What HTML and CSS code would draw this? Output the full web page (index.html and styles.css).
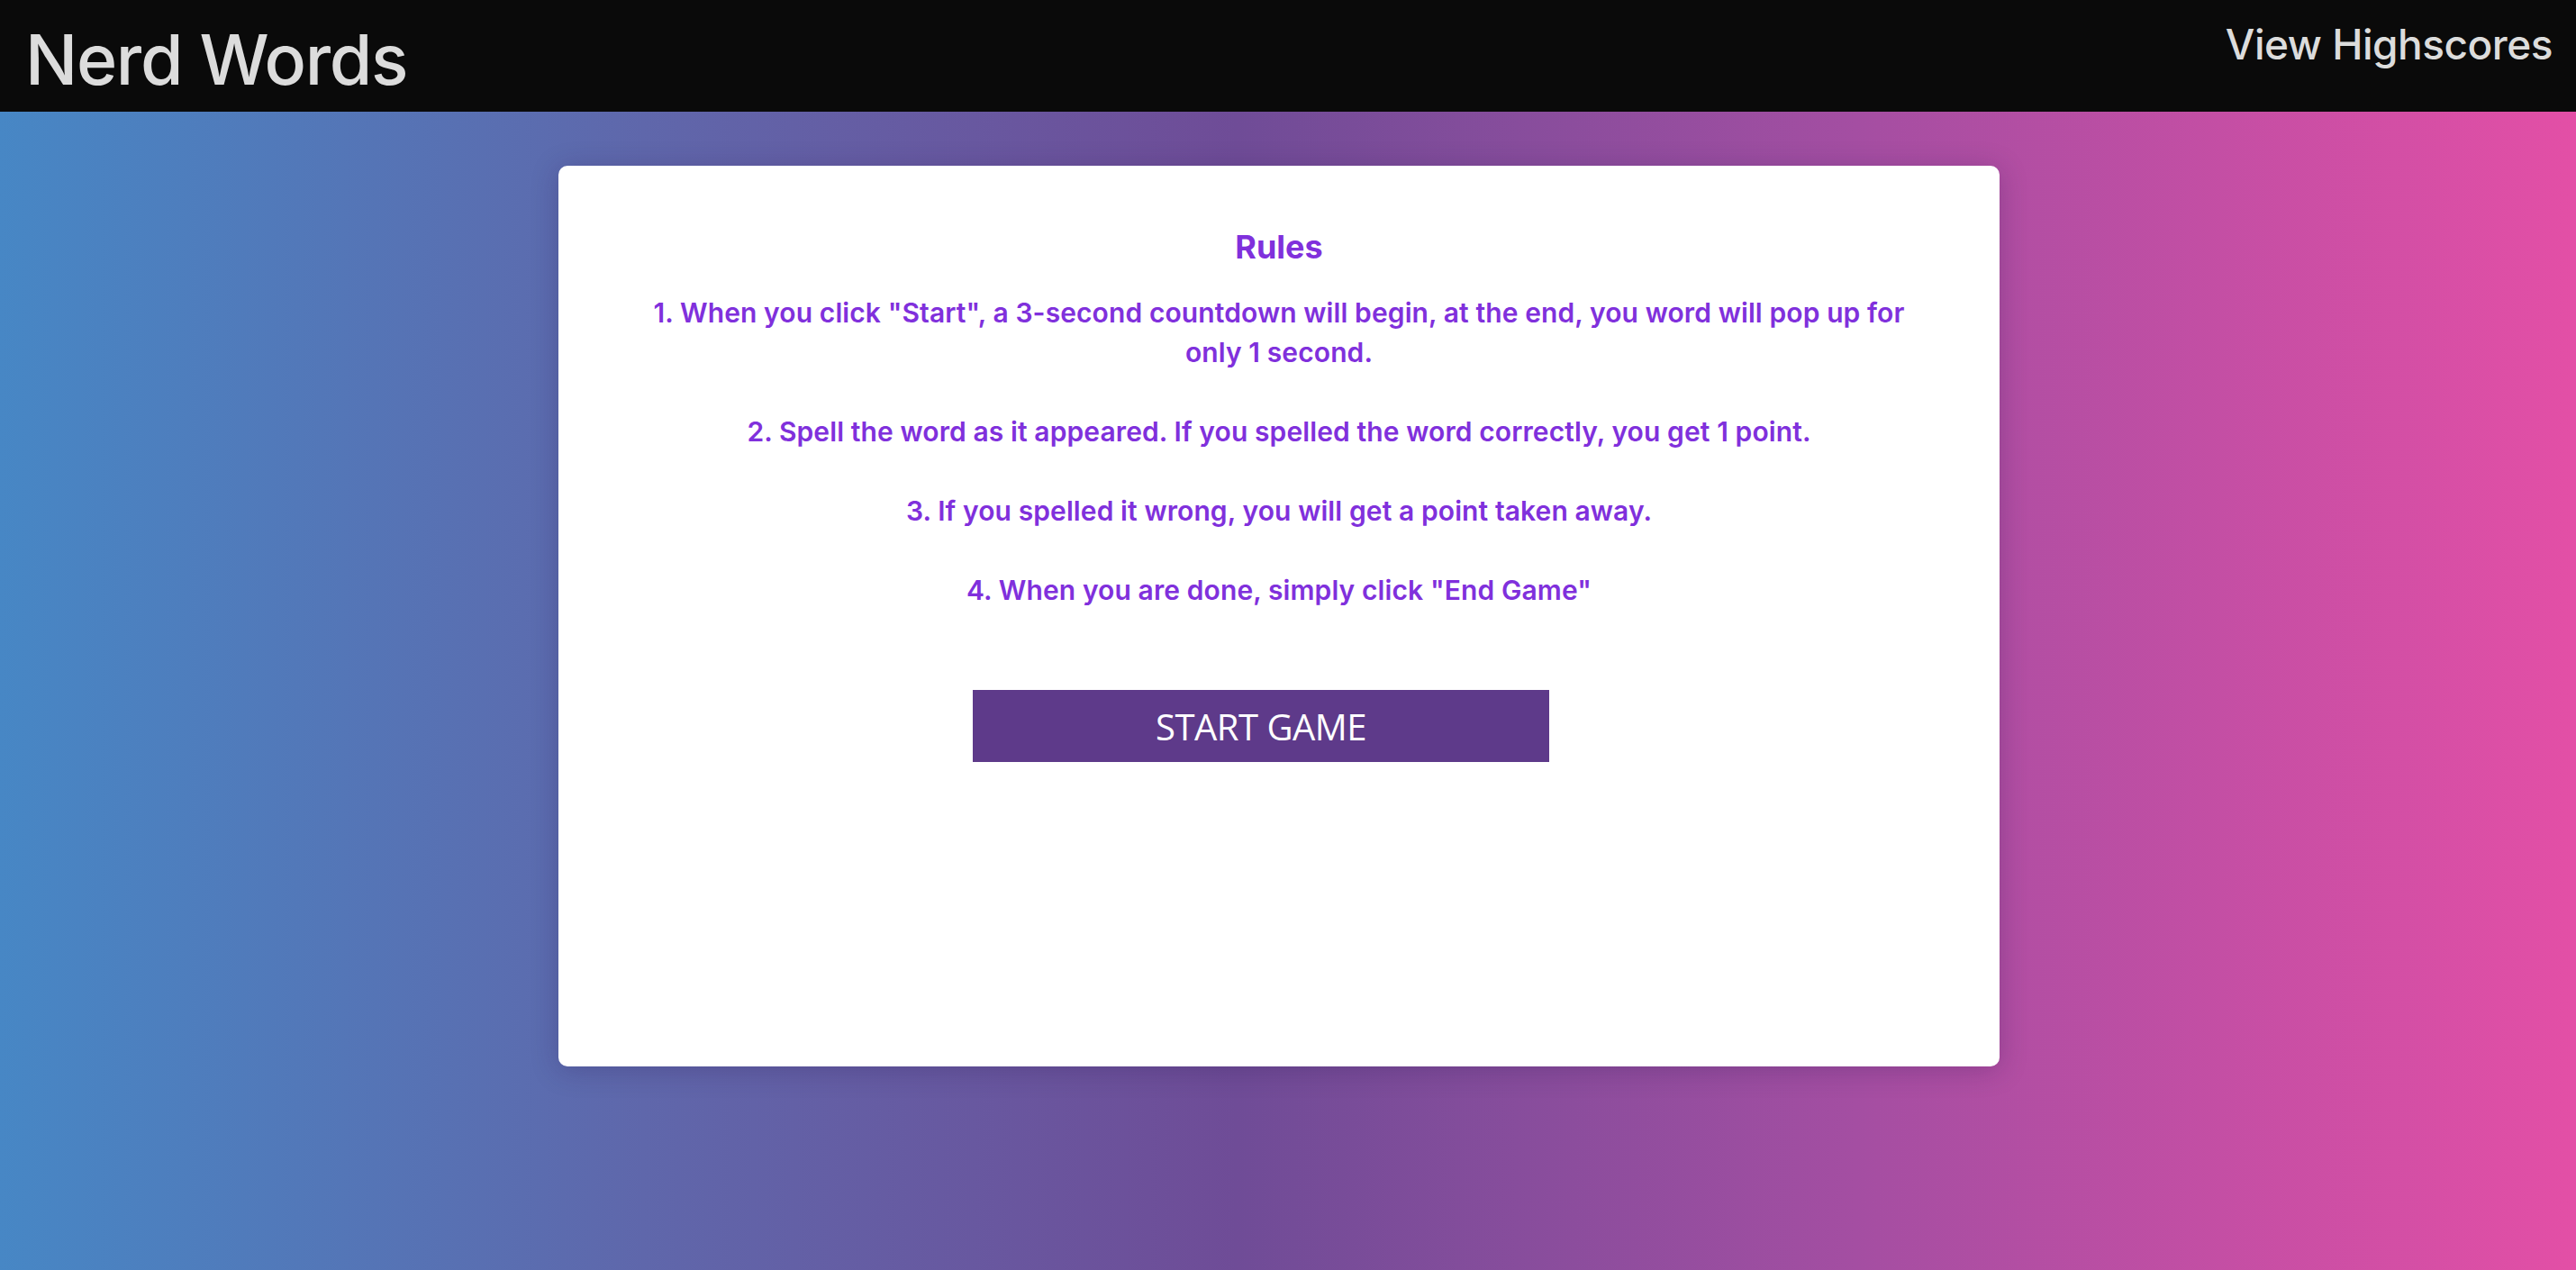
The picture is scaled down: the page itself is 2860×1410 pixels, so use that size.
FILE: index.html
```html
<!DOCTYPE html>
<html lang="en">
<head>
<meta charset="utf-8">
<title>Nerd Words</title>
<link rel="stylesheet" href="styles.css">
</head>
<body>
<header class="topbar">
  <h1 class="brand">Nerd Words</h1>
  <a class="highscores" href="#">View Highscores</a>
</header>
<main class="stage">
  <section class="card">
    <h2 class="rules-title">Rules</h2>
    <div class="rules">
      <p>1. When you click "Start", a 3-second countdown will begin, at the end, you word will pop up for only 1 second.</p>
      <p>2. Spell the word as it appeared. If you spelled the word correctly, you get 1 point.</p>
      <p>3. If you spelled it wrong, you will get a point taken away.</p>
      <p>4. When you are done, simply click "End Game"</p>
    </div>
    <button class="start-btn" type="button">START GAME</button>
  </section>
</main>
</body>
</html>
```
FILE: styles.css
```css
html, body {
  margin: 0;
  padding: 0;
  height: 100%;
}
body {
  font-family: Inter, "Noto Sans", sans-serif;
  background: linear-gradient(90deg, #4787c5 0%, #5f67ab 25%, #6f4c97 48%, #a44ea2 72%, #e34fa6 100%);
  min-height: 1410px;
  display: flex;
  flex-direction: column;
}
.topbar {
  height: 124px;
  background: #0a0a0a;
  display: flex;
  justify-content: space-between;
  align-items: flex-start;
  padding: 0 26px 0 28px;
  box-sizing: border-box;
}
.brand {
  margin: 0;
  font-weight: 500;
  font-size: 77px;
  line-height: 1;
  color: #dcdcdc;
  padding-top: 28px;
  letter-spacing: -1.3px;
}
.highscores {
  color: #dcdcdc;
  text-decoration: none;
  font-size: 46px;
  font-weight: 500;
  line-height: 1;
  padding-top: 26px;
  letter-spacing: -0.5px;
}
.stage {
  flex: 1;
  display: flex;
  justify-content: center;
  padding: 60px 20px 0 0;
}
.card {
  width: 1600px;
  height: 1000px;
  box-sizing: border-box;
  background: #ffffff;
  border-radius: 10px;
  box-shadow: 0 4px 30px rgba(40, 20, 80, 0.25);
  padding: 68px 100px 0;
  display: flex;
  flex-direction: column;
  align-items: center;
  color: #8030dc;
  text-align: center;
}
.rules-title {
  margin: 0 0 29px;
  font-size: 36px;
  line-height: 44px;
  font-weight: 700;
}
.rules {
  font-size: 30px;
  line-height: 44px;
  font-weight: 600;
  letter-spacing: 0.1px;
}
.rules p {
  margin: 0 0 44px;
}
.rules p:last-child {
  margin-bottom: 0;
}
.start-btn {
  margin-top: 89px;
  width: 640px;
  height: 80px;
  margin-right: 40px;
  border: none;
  background: #5e3a8a;
  color: #ffffff;
  font-family: "Open Sans", "DejaVu Sans", sans-serif;
  font-size: 40px;
  font-weight: 400;
  letter-spacing: -0.5px;
  cursor: pointer;
}
```
